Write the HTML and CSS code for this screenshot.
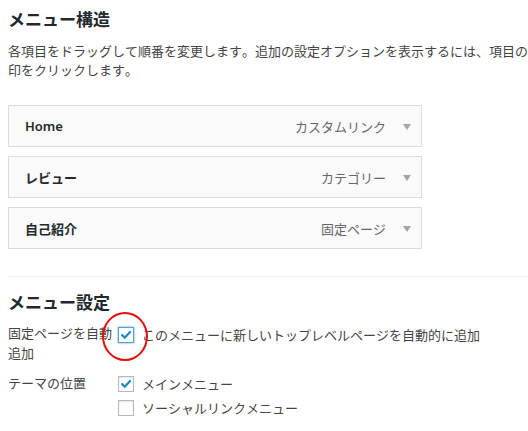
FILE: index.html
```html
<!DOCTYPE html>
<html lang="ja">
<head>
<meta charset="utf-8">
<link rel="stylesheet" href="styles.css">
</head>
<body>
<div class="wrap">
  <h2 class="title">メニュー構造</h2>
  <p class="desc">各項目をドラッグして順番を変更します。追加の設定オプションを表示するには、項目の<br>印をクリックします。</p>
  <ul class="menu">
    <li class="item"><span class="name">Home</span><span class="type">カスタムリンク</span><span class="arrow"></span></li>
    <li class="item"><span class="name">レビュー</span><span class="type">カテゴリー</span><span class="arrow"></span></li>
    <li class="item"><span class="name">自己紹介</span><span class="type">固定ページ</span><span class="arrow"></span></li>
  </ul>
  <div class="sep"></div>
  <h3 class="title2">メニュー設定</h3>
  <div class="settings">
    <div class="label">固定ページを自動追加</div>
    <div class="opts first">
      <label class="opt"><span class="cb checked focus"><svg viewBox="0 0 16 16" width="16" height="16"><path d="M3.6 8.2 L6.6 11.2 L12.6 4.6" fill="none" stroke="#1e8cbe" stroke-width="2.6" stroke-linecap="round" stroke-linejoin="round"/></svg></span><span class="opt-text">このメニューに新しいトップレベルページを自動的に追加</span><span class="ring"></span></label>
    </div>
    <div class="label row2">テーマの位置</div>
    <div class="opts">
      <label class="opt"><span class="cb checked"><svg viewBox="0 0 16 16" width="16" height="16"><path d="M3.6 8.2 L6.6 11.2 L12.6 4.6" fill="none" stroke="#1e8cbe" stroke-width="2.6" stroke-linecap="round" stroke-linejoin="round"/></svg></span><span class="opt-text">メインメニュー</span></label>
      <label class="opt"><span class="cb"></span><span class="opt-text">ソーシャルリンクメニュー</span></label>
    </div>
  </div>
</div>
</body>
</html>
```

FILE: styles.css
```css
html, body {
  margin: 0;
  padding: 0;
  background: #fff;
  overflow: hidden;
}
body {
  font-family: "Noto Sans", "Noto Sans CJK JP", sans-serif;
  font-size: 13px;
  color: #444;
  font-kerning: none;
}
.wrap {
  width: 520px;
  padding: 0 0 0 8px;
}
.title {
  margin: 0;
  padding-top: 9px;
  font-size: 17px;
  line-height: 22px;
  font-weight: 700;
  color: #23282d;
}
.desc {
  margin: 11px 0 0;
  line-height: 19px;
  color: #444;
}
.menu {
  list-style: none;
  margin: 25px 0 0;
  padding: 0;
  width: 414px;
  display: flex;
  flex-direction: column;
  gap: 9px;
}
.item {
  box-sizing: border-box;
  height: 42px;
  border: 1px solid #dcdcde;
  background: #fafafa;
  display: flex;
  align-items: center;
  padding: 0 10px 0 16px;
}
.name {
  font-weight: 600;
  color: #23282d;
  flex: 1;
}
.type {
  color: #666;
  margin-right: 17px;
}
.arrow {
  width: 0;
  height: 0;
  border-left: 4.5px solid transparent;
  border-right: 4.5px solid transparent;
  border-top: 6px solid #a0a5aa;
  margin-top: 1px;
}
.sep {
  margin-top: 27px;
  border-top: 1px solid #eeeeee;
  width: 520px;
}
.title2 {
  margin: 15px 0 0;
  font-size: 17px;
  line-height: 22px;
  font-weight: 700;
  color: #23282d;
}
.settings {
  margin-top: 7px;
  display: grid;
  grid-template-columns: 110px 1fr;
  row-gap: 12px;
}
.label {
  line-height: 19.5px;
  color: #444;
  padding-top: 3px;
}
.label.row2 {
  padding-top: 0;
  line-height: 17px;
}
.opts {
  display: flex;
  flex-direction: column;
  gap: 6px;
}
.opts.first {
  padding-top: 5px;
}
.opt {
  position: relative;
  display: flex;
  align-items: center;
  gap: 8px;
  line-height: 17px;
  color: #444;
}
.cb {
  box-sizing: border-box;
  width: 16px;
  height: 16px;
  border: 1px solid #b4b9be;
  background: #fff;
  display: inline-flex;
  align-items: center;
  justify-content: center;
  box-shadow: inset 0 1px 2px rgba(0,0,0,0.1);
  flex: none;
}
.cb svg {
  display: block;
}
.cb.focus {
  border-color: #5b9dd9;
  box-shadow: 0 0 2px rgba(30,140,190,0.8);
}
.opt-text {
  padding-top: 1px;
}
.ring {
  position: absolute;
  left: -16px;
  top: -14px;
  width: 42px;
  height: 45px;
  border: 2.5px solid #e41010;
  border-radius: 50%;
  pointer-events: none;
}
```
